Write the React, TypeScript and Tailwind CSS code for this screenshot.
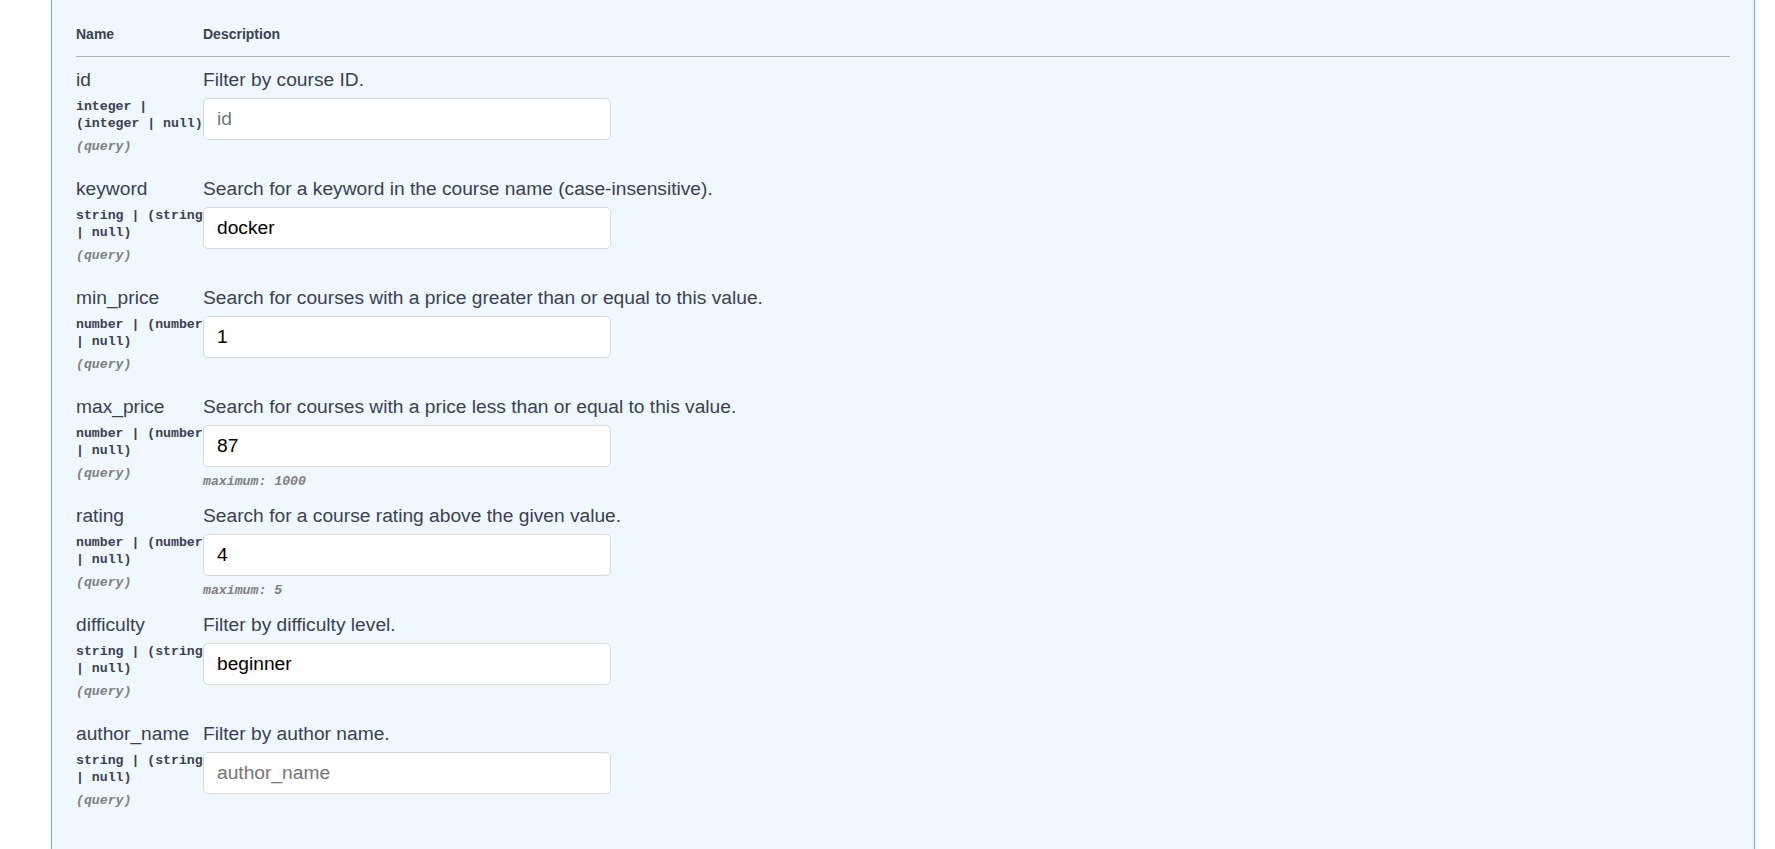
import React from "react";

type Param = {
  name: string;
  type: string[];
  description: string;
  value?: string;
  placeholder?: string;
  maximum?: string;
};

const params: Param[] = [
  {
    name: "id",
    type: ["integer |", "(integer | null)"],
    description: "Filter by course ID.",
    placeholder: "id",
  },
  {
    name: "keyword",
    type: ["string | (string", "| null)"],
    description: "Search for a keyword in the course name (case-insensitive).",
    value: "docker",
  },
  {
    name: "min_price",
    type: ["number | (number", "| null)"],
    description: "Search for courses with a price greater than or equal to this value.",
    value: "1",
  },
  {
    name: "max_price",
    type: ["number | (number", "| null)"],
    description: "Search for courses with a price less than or equal to this value.",
    value: "87",
    maximum: "maximum: 1000",
  },
  {
    name: "rating",
    type: ["number | (number", "| null)"],
    description: "Search for a course rating above the given value.",
    value: "4",
    maximum: "maximum: 5",
  },
  {
    name: "difficulty",
    type: ["string | (string", "| null)"],
    description: "Filter by difficulty level.",
    value: "beginner",
  },
  {
    name: "author_name",
    type: ["string | (string", "| null)"],
    description: "Filter by author name.",
    placeholder: "author_name",
  },
];

const ParamRow = ({ param }: { param: Param }) => {
  return (
    <div className="flex h-[109px] pt-[12px]">
      <div className="w-[127px] shrink-0">
        <div className="text-[19.2px] leading-[22px] text-[#3b4151]">{param.name}</div>
        <div className="mt-[7px] font-['Liberation_Mono',monospace] text-[13.2px] leading-[17px] font-bold text-[#3b4151]">
          {param.type.map((line) => (
            <div key={line} className="whitespace-pre">
              {line}
            </div>
          ))}
        </div>
        <div className="mt-[6px] font-['Liberation_Mono',monospace] text-[13.2px] leading-[17px] font-bold italic text-[#808080]">
          (query)
        </div>
      </div>
      <div className="flex flex-col">
        <div className="text-[19.2px] leading-[22px] text-[#3b4151]">{param.description}</div>
        <input
          className="mt-[7px] h-[42px] w-[408px] rounded-[5px] border border-[#d9d9d9] bg-white pl-[13px] text-[19.2px] text-black outline-none placeholder:text-[#757575]"
          defaultValue={param.value}
          placeholder={param.placeholder}
        />
        {param.maximum && (
          <div className="mt-[6px] font-['Liberation_Mono',monospace] text-[13.2px] leading-[17px] font-bold italic text-[#808080]">
            {param.maximum}
          </div>
        )}
      </div>
    </div>
  );
};

const App = () => {
  return (
    <div className="h-[849px] overflow-hidden bg-white font-['Liberation_Sans',Arial,sans-serif]">
      <div className="ml-[51px] min-h-[849px] w-[1704px] border-x border-[#61affe] bg-[#eff7ff] px-[24px] pt-[26px]">
        <div className="flex border-b border-[#aeb4be] pb-[13px] text-[14px] leading-[17px] font-bold text-[#3b4151]">
          <div className="w-[127px]">Name</div>
          <div>Description</div>
        </div>
        {params.map((param) => (
          <ParamRow key={param.name} param={param} />
        ))}
      </div>
    </div>
  );
};

export default App;
